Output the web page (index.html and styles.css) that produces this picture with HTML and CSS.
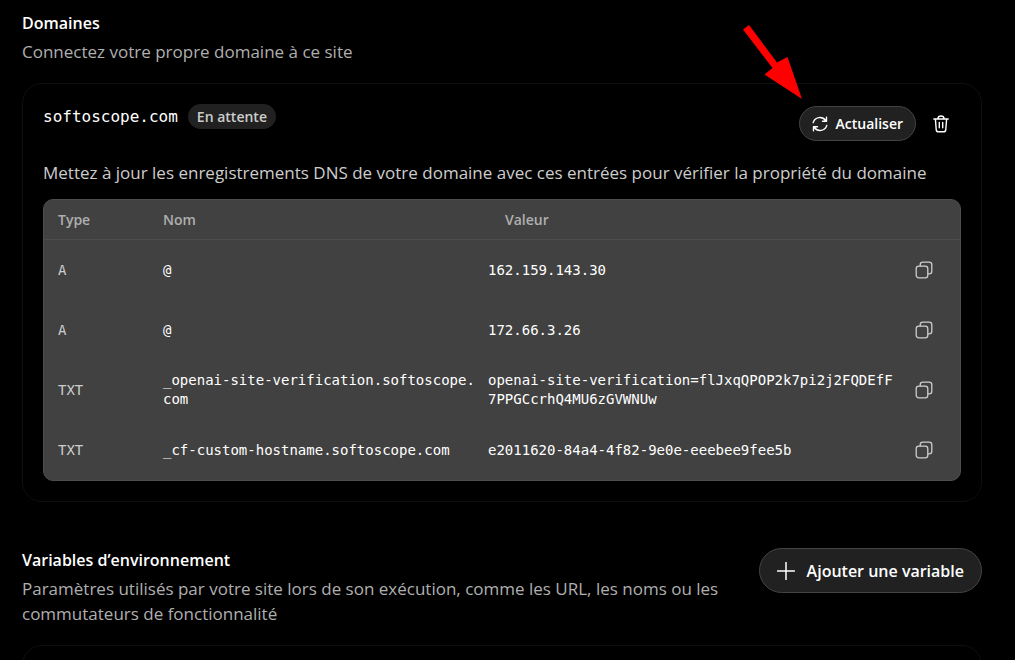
FILE: index.html
```html
<!DOCTYPE html>
<html lang="fr">
<head>
    <meta charset="UTF-8">
    <meta name="viewport" content="width=device-width, initial-scale=1.0">
    <title>Domaines</title>
    <link rel="stylesheet" href="styles.css">
</head>
<body>
    <!-- Shared icons -->
    <svg class="sprite" aria-hidden="true">
        <symbol id="icon-copy" viewBox="0 0 18 18">
            <rect x="1.2" y="5.2" width="11.6" height="11.6" rx="2.6"/>
            <path d="M5.2 5V3.8a2.6 2.6 0 0 1 2.6-2.6h6.4a2.6 2.6 0 0 1 2.6 2.6v6.4a2.6 2.6 0 0 1-2.6 2.6H13"/>
        </symbol>
    </svg>

    <main class="page">
        <!-- Domains -->
        <section class="section">
            <div class="section-header">
                <div class="section-text">
                    <h2>Domaines</h2>
                    <p>Connectez votre propre domaine à ce site</p>
                </div>
            </div>

            <div class="card">
                <div class="card-header">
                    <div class="domain">
                        <span class="domain-name">softoscope.com</span>
                        <span class="badge">En attente</span>
                    </div>
                    <div class="actions">
                        <button type="button" class="btn btn-small">
                            <svg class="icon-refresh" viewBox="0 0 16 16" aria-hidden="true">
                                <path d="M1.2 6.6A7 7 0 0 1 13.6 4.5M14.5 1.2v4h-4M14.8 9.4A7 7 0 0 1 2.4 11.5M1.5 14.8v-4h4"/>
                            </svg>
                            Actualiser
                        </button>
                        <button type="button" class="btn-icon" aria-label="Supprimer">
                            <svg class="icon-trash" viewBox="0 0 16 18" aria-hidden="true">
                                <path d="M.8 4h14.4M2.4 4l.8 10.6a2.4 2.4 0 0 0 2.4 2.2h4.8a2.4 2.4 0 0 0 2.4-2.2L13.6 4M4.8 3.8C5 2 6.3 1 8 1s3 1 3.2 2.8M6.3 7.5v5.2M9.7 7.5v5.2"/>
                            </svg>
                        </button>
                        <svg class="arrow" viewBox="0 0 62 78" aria-hidden="true">
                            <polygon points="3,7.5 9,3 37,40.5 47.5,35 62,77 24.5,52.5 32.5,46"/>
                        </svg>
                    </div>
                </div>

                <p class="hint">Mettez à jour les enregistrements DNS de votre domaine avec ces entrées pour vérifier la propriété du domaine</p>

                <div class="table-wrap">
                    <table>
                        <thead>
                            <tr>
                                <th class="col-type">Type</th>
                                <th class="col-name">Nom</th>
                                <th class="col-value">Valeur</th>
                                <th class="col-copy"></th>
                            </tr>
                        </thead>
                        <tbody>
                            <tr>
                                <td class="type">A</td>
                                <td>@</td>
                                <td class="value">162.159.143.30</td>
                                <td class="copy"><button type="button" class="btn-copy" aria-label="Copier"><svg><use href="#icon-copy"/></svg></button></td>
                            </tr>
                            <tr>
                                <td class="type">A</td>
                                <td>@</td>
                                <td class="value">172.66.3.26</td>
                                <td class="copy"><button type="button" class="btn-copy" aria-label="Copier"><svg><use href="#icon-copy"/></svg></button></td>
                            </tr>
                            <tr>
                                <td class="type">TXT</td>
                                <td>_openai-site-verification.softoscope.com</td>
                                <td class="value">openai-site-verification=flJxqQPOP2k7pi2j2FQDEfF7PPGCcrhQ4MU6zGVWNUw</td>
                                <td class="copy"><button type="button" class="btn-copy" aria-label="Copier"><svg><use href="#icon-copy"/></svg></button></td>
                            </tr>
                            <tr>
                                <td class="type">TXT</td>
                                <td>_cf-custom-hostname.softoscope.com</td>
                                <td class="value">e2011620-84a4-4f82-9e0e-eeebee9fee5b</td>
                                <td class="copy"><button type="button" class="btn-copy" aria-label="Copier"><svg><use href="#icon-copy"/></svg></button></td>
                            </tr>
                        </tbody>
                    </table>
                </div>
            </div>
        </section>

        <!-- Environment variables -->
        <section class="section">
            <div class="section-header">
                <div class="section-text">
                    <h2>Variables d’environnement</h2>
                    <p>Paramètres utilisés par votre site lors de son exécution, comme les URL, les noms ou les commutateurs de fonctionnalité</p>
                </div>
                <button type="button" class="btn">
                    <svg class="icon-plus" viewBox="0 0 18 18" aria-hidden="true">
                        <path d="M9 .5v17M.5 9h17"/>
                    </svg>
                    Ajouter une variable
                </button>
            </div>
            <div class="card"></div>
        </section>
    </main>
</body>
</html>
```
FILE: styles.css
```css
* {
    margin: 0;
    padding: 0;
    box-sizing: border-box;
}

body {
    background: #000;
    color: #fff;
    font-family: 'Segoe UI', 'Open Sans', 'Noto Sans', sans-serif;
    font-size: 17px;
    line-height: 25px;
}

svg {
    fill: none;
    stroke: currentColor;
    stroke-linecap: round;
    stroke-linejoin: round;
    flex-shrink: 0;
}

.sprite {
    display: none;
}

.page {
    height: 100vh;
    overflow: hidden;
    padding: 11px 33px 0 22px;
}

.section {
    margin-bottom: 46px;
}

.section-header {
    display: flex;
    justify-content: space-between;
    align-items: flex-start;
    gap: 24px;
    margin-bottom: 19px;
}

.section-text p {
    margin-top: 3px;
    color: #afafaf;
}

h2 {
    font-size: 16px;
    font-weight: 600;
}

/* Card */
.card {
    padding: 20px;
    border: 1px solid #0f0f0f;
    border-radius: 20px;
}

.card-header {
    display: flex;
    justify-content: space-between;
    align-items: flex-start;
}

.domain {
    display: flex;
    align-items: center;
    gap: 10px;
}

.domain-name {
    font-family: Consolas, 'DejaVu Sans Mono', monospace;
    font-size: 16px;
}

.badge {
    padding: 0 9px;
    border-radius: 13px;
    background: #212121;
    color: #cdcdcd;
    font-size: 14px;
    font-weight: 600;
}

.actions {
    position: relative;
    display: flex;
    align-items: center;
    gap: 5px;
    margin-top: 2px;
}

/* Buttons */
.btn {
    display: flex;
    align-items: center;
    gap: 12px;
    height: 45px;
    padding: 0 17px;
    border: 1px solid #444;
    border-radius: 23px;
    background: #212121;
    color: #fff;
    font-family: inherit;
    font-size: 16px;
    font-weight: 600;
    white-space: nowrap;
    cursor: pointer;
}

.btn-small {
    gap: 8px;
    height: 35px;
    padding: 0 12px;
    font-size: 14px;
}

.btn-icon,
.btn-copy {
    display: flex;
    align-items: center;
    justify-content: center;
    border: none;
    background: none;
    color: #fff;
    cursor: pointer;
}

.btn-icon {
    width: 40px;
    height: 35px;
}

.btn-copy {
    width: 30px;
    height: 30px;
    color: #cdcdcd;
}

.btn-copy svg {
    width: 18px;
    height: 18px;
    stroke-width: 1.3;
}

.icon-refresh {
    width: 16px;
    height: 16px;
    stroke-width: 1.4;
}

.icon-trash {
    width: 16px;
    height: 18px;
    stroke-width: 1.4;
}

.icon-plus {
    width: 18px;
    height: 18px;
    stroke-width: 1.5;
}

.arrow {
    position: absolute;
    top: -84px;
    left: -59px;
    width: 62px;
    height: 78px;
    fill: #f00;
    stroke: none;
}

/* DNS records */
.hint {
    margin: 19px 0 14px;
    color: #cdcdcd;
}

.table-wrap {
    border: 1px solid #4d4d4d;
    border-radius: 10px;
    background: #414141;
    overflow: hidden;
}

table {
    width: 100%;
    border-collapse: separate;
    border-spacing: 0;
    table-layout: fixed;
}

th {
    height: 40px;
    padding: 0 14px;
    border-bottom: 1px solid #4d4d4d;
    color: #afafaf;
    font-size: 14px;
    font-weight: 600;
    text-align: left;
}

.col-type {
    width: 105px;
}

.col-name {
    width: 328px;
}

.col-value {
    padding-left: 28px;
}

.col-copy {
    width: 60px;
}

td {
    height: 60px;
    padding: 0 0 0 14px;
    font-family: Consolas, 'DejaVu Sans Mono', monospace;
    font-size: 14px;
    line-height: 19px;
    vertical-align: middle;
    word-break: break-all;
}

td.type {
    color: #cdcdcd;
}

td.value {
    padding-left: 11px;
}

td.copy {
    padding: 0 0 0 9px;
}
```
